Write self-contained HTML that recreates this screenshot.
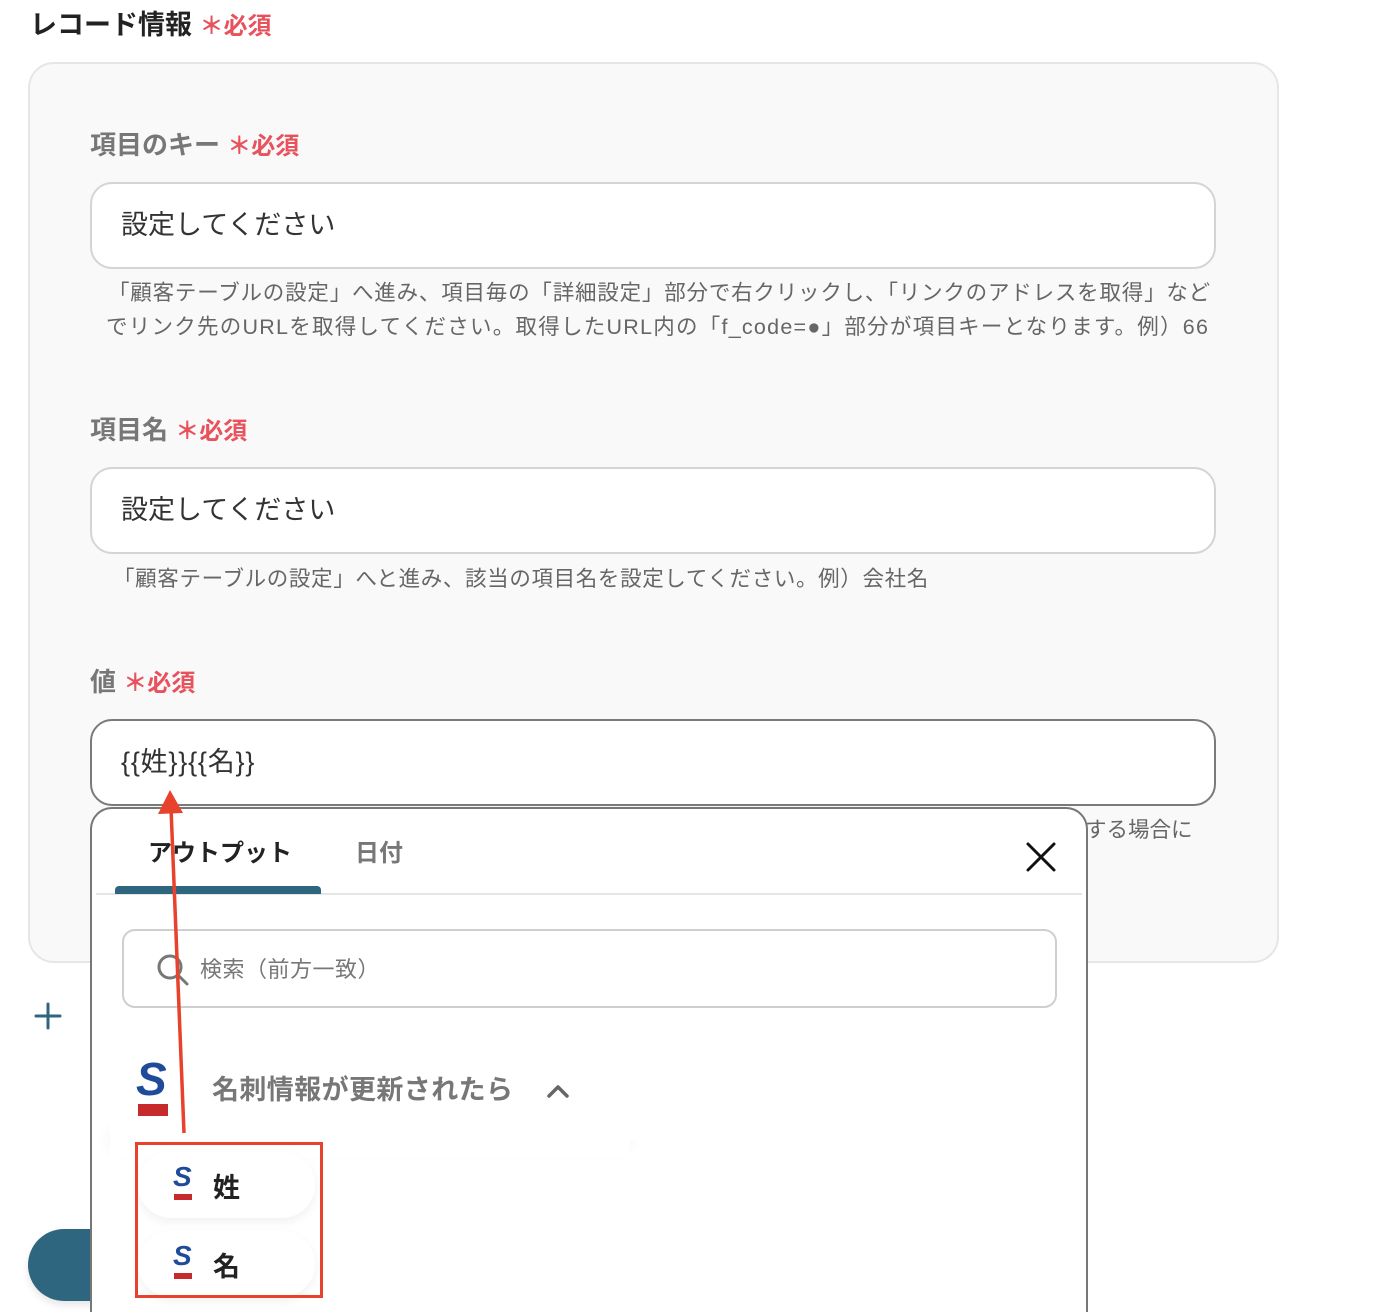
<!DOCTYPE html>
<html><head><meta charset="utf-8">
<style>
*{margin:0;padding:0;box-sizing:border-box}
html{width:1392px;height:1312px;overflow:hidden}
body{width:1392px;height:1312px;overflow:hidden;background:#fff;position:relative;font-family:"Liberation Sans","Noto Sans CJK JP",sans-serif}
.a{position:absolute;white-space:nowrap}
.req{color:#e8525c;font-weight:bold}
.lbl{font-size:26px;font-weight:bold;color:#777;line-height:30px}
.inp{position:absolute;left:90px;width:1126px;height:87px;background:#fff;border:2px solid #d4d4d4;border-radius:22px;font-size:27px;color:#333;padding-left:29px;line-height:83px}
.help{font-size:21.5px;color:#666;line-height:34px}
.pill{position:absolute;left:138px;width:177px;height:66px;background:#fff;border-radius:33px;box-shadow:0 4px 10px rgba(0,0,0,.06)}
.pill span{position:absolute;left:75px;top:14px;font-size:27px;font-weight:bold;color:#222}
</style></head><body>
<div class="a" style="left:30px;top:8px;font-size:27px;font-weight:bold;color:#222;line-height:34px">レコード情報 <span class="req" style="font-size:24px">＊必須</span></div>

<div class="a" style="left:28px;top:62px;width:1251px;height:901px;background:#f9f9f9;border:2px solid #e6e6e6;border-radius:26px"></div>

<div class="a lbl" style="left:90px;top:130px">項目のキー <span class="req" style="font-size:24px">＊必須</span></div>
<div class="inp" style="top:182px">設定してください</div>
<div class="a help" style="left:108px;top:276px"><div style="letter-spacing:0.8px">「顧客テーブルの設定」へ進み、項目毎の「詳細設定」部分で右クリックし、「リンクのアドレスを取得」など</div><div style="letter-spacing:1.25px;margin-left:-2px">でリンク先のURLを取得してください。取得したURL内の「f_code=●」部分が項目キーとなります。例）66</div></div>

<div class="a lbl" style="left:90px;top:415px">項目名 <span class="req" style="font-size:24px">＊必須</span></div>
<div class="inp" style="top:467px">設定してください</div>
<div class="a help" style="left:113px;top:562px;letter-spacing:0.65px">「顧客テーブルの設定」へと進み、該当の項目名を設定してください。例）会社名</div>

<div class="a lbl" style="left:90px;top:667px">値 <span class="req" style="font-size:24px">＊必須</span></div>
<div class="inp" style="top:719px;border-color:#7a7a7a;letter-spacing:0.8px">{{姓}}{{名}}</div>
<div class="a help" style="left:1085px;top:813px">する場合に</div>

<svg class="a" style="left:34px;top:1002px" width="28" height="28"><path d="M14 2V26M2 14H26" stroke="#2e6680" stroke-width="3" stroke-linecap="round"/></svg>
<div class="a" style="left:28px;top:1229px;width:120px;height:72px;background:#2e6680;border-radius:36px;box-shadow:0 4px 8px rgba(0,0,0,.1)"></div>

<div class="a" style="left:90px;top:807px;width:998px;height:520px;background:#fff;border:2px solid #777;border-bottom:none;border-radius:22px 22px 0 0"></div>
<div class="a" style="left:148px;top:838px;font-size:24px;font-weight:bold;color:#222;line-height:32px">アウトプット</div>
<div class="a" style="left:355px;top:838px;font-size:24px;font-weight:bold;color:#777;line-height:32px">日付</div>
<div class="a" style="left:96px;top:893px;width:986px;height:2px;background:#e5e5e5"></div>
<div class="a" style="left:115px;top:886px;width:206px;height:8px;background:#2e6680;border-radius:4px 4px 0 0"></div>
<svg class="a" style="left:1025px;top:841px" width="32" height="32"><path d="M3 3L29 29M29 3L3 29" stroke="#111" stroke-width="3" stroke-linecap="round"/></svg>

<div class="a" style="left:122px;top:929px;width:935px;height:79px;border:2px solid #cfcfcf;border-radius:13px;background:#fff"></div>
<svg class="a" style="left:156px;top:953px" width="34" height="34"><circle cx="14" cy="14" r="11" stroke="#777" stroke-width="3" fill="none"/><path d="M22 22L31 31" stroke="#777" stroke-width="3" stroke-linecap="round"/></svg>
<div class="a" style="left:200px;top:954px;font-size:22px;color:#777;line-height:32px;letter-spacing:0.5px">検索（前方一致）</div>

<div class="a" style="left:110px;top:1138px;width:520px;height:20px;box-shadow:0 -8px 16px rgba(0,0,0,.05)"></div>
<div class="a" style="left:110px;top:1040px;width:540px;height:100px;background:#fff"></div>
<div class="a" style="left:136px;top:1054px;font-size:46px;font-weight:bold;font-style:italic;color:#1f4b99;line-height:50px">S</div>
<div class="a" style="left:138px;top:1104px;width:30px;height:12px;background:#c62a2a"></div>
<div class="a" style="left:212px;top:1073px;font-size:27px;font-weight:bold;color:#777;line-height:34px;letter-spacing:0.4px">名刺情報が更新されたら</div>
<svg class="a" style="left:546px;top:1083px" width="24" height="16"><path d="M3 13L12 4L21 13" stroke="#666" stroke-width="3.5" fill="none" stroke-linecap="round" stroke-linejoin="round"/></svg>

<div class="pill" style="top:1152px"><div class="a" style="left:35px;top:10px;font-size:28px;font-weight:bold;font-style:italic;color:#1f4b99;line-height:30px">S</div><div class="a" style="left:36px;top:42px;width:18px;height:6px;background:#c62a2a"></div><span>姓</span></div>
<div class="pill" style="top:1231px"><div class="a" style="left:35px;top:10px;font-size:28px;font-weight:bold;font-style:italic;color:#1f4b99;line-height:30px">S</div><div class="a" style="left:36px;top:42px;width:18px;height:6px;background:#c62a2a"></div><span>名</span></div>
<div class="a" style="left:135px;top:1142px;width:188px;height:156px;border:3px solid #e8412c"></div>

<svg class="a" style="left:0;top:0" width="1392" height="1312"><path d="M184 1133L171 808" stroke="#e8412c" stroke-width="3.5"/><path d="M170 790L158 814L183 813Z" fill="#e8412c"/></svg>
</body></html>
